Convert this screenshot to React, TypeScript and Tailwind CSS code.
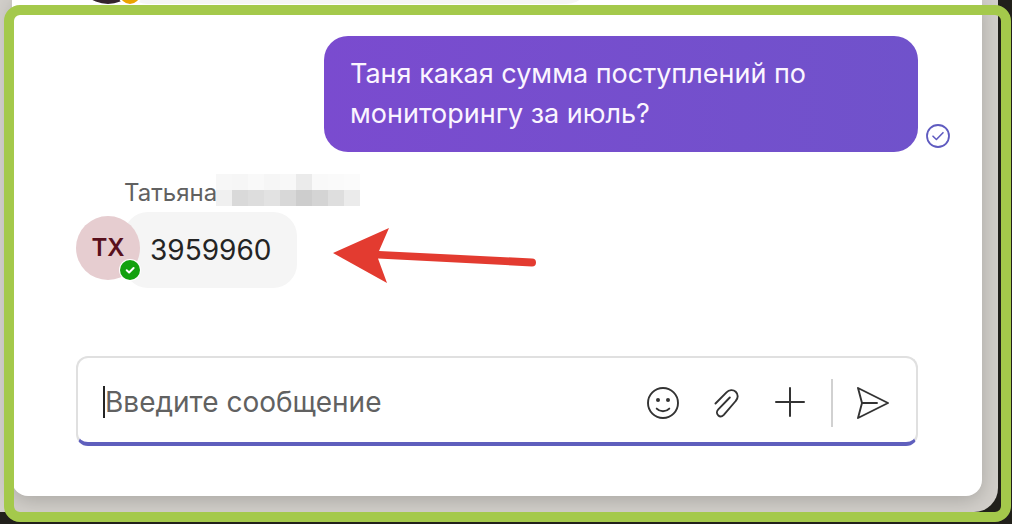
import React from 'react';

const nameCells = [
  'bg-[#f7f7f7]', 'bg-[#f6f6f6]', 'bg-[#f9f9f9]', 'bg-[#f6f6f6]', 'bg-[#f8f8f8]', 'bg-[#ebebeb]', 'bg-[#f9f9f9]', 'bg-[#fafafa]', 'bg-[#fbfbfb]',
  'bg-[#f0f0f0]', 'bg-[#d9d9d9]', 'bg-[#dddddd]', 'bg-[#e2e2e2]', 'bg-[#d8d8d8]', 'bg-[#cdcdcd]', 'bg-[#d4d4d4]', 'bg-[#dedede]', 'bg-[#ebebeb]',
];

function PreviousMessage() {
  return (
    <div className="flex h-1 items-end overflow-hidden pl-16">
      <div className="relative z-10 h-16 w-16 shrink-0 rounded-full bg-[#33232b]">
        <span className="absolute -right-0.5 -bottom-0.5 h-6 w-6 rounded-full border-2 border-white bg-[#eaa300]" />
      </div>
      <div className="-ml-4 h-16 w-[466px] rounded-3xl bg-[#f5f5f5]" />
    </div>
  );
}

function OutgoingMessage() {
  return (
    <div className="mt-8 flex items-end justify-end gap-2 pr-8">
      <div className="w-[594px] rounded-3xl bg-linear-to-r from-[#7a4bcf] to-[#7052cb] px-[26px] py-[18px] text-[27px] leading-10 text-[#fbf5ff]">
        Таня какая сумма поступлений по мониторингу за июль?
      </div>
      <svg className="mb-1 h-6 w-6" viewBox="0 0 24 24" fill="none" stroke="#5f5bc0" strokeWidth="1.8" strokeLinecap="round" strokeLinejoin="round" role="img" aria-label="Отправлено">
        <circle cx="12" cy="12" r="11" />
        <path d="m7 12.2 3.4 3.3L17 8.7" strokeWidth="1.6" />
      </svg>
    </div>
  );
}

function Arrow() {
  return (
    <svg className="ml-9 mt-3 h-[58px] w-[204px]" viewBox="0 0 204 58" aria-hidden="true">
      <path d="M0 26 56 1 46 24 199 31.5a4 4 0 0 1 0 8L45 31.5 54 56Z" fill="#e33b30" />
    </svg>
  );
}

function IncomingMessage() {
  return (
    <div className="mt-5 pl-16">
      <div className="flex h-10 items-start pl-12 text-2xl leading-10 text-[#616161]">
        <span className="pt-px">Татьяна</span>
        <span className="-ml-px mt-0.5 grid grid-cols-9 grid-rows-2" aria-hidden="true">
          {nameCells.map((cell, i) => (
            <span key={i} className={`h-4 w-4 ${cell}`} />
          ))}
        </span>
      </div>
      <div className="flex items-center">
        <div className="relative z-10 -mt-1 flex h-16 w-16 items-center justify-center rounded-full bg-[#e6cdd0] text-2xl font-semibold text-[#58101c]">
          ТХ
          <svg className="absolute -bottom-px -right-px h-[22px] w-[22px]" viewBox="0 0 22 22" fill="none" role="img" aria-label="В сети">
            <circle cx="11" cy="11" r="11" fill="#fff" />
            <circle cx="11" cy="11" r="10" fill="#13a10e" />
            <path d="m7.700 11.300 2.400 2.200 4.500-4.500" stroke="#fff" strokeWidth="2" strokeLinecap="round" strokeLinejoin="round" />
          </svg>
        </div>
        <div className="-ml-4 rounded-3xl bg-[#f5f5f5] px-[26px] py-[18px] text-[28px] leading-10 text-[#242424]">3959960</div>
        <Arrow />
      </div>
    </div>
  );
}

function Composer() {
  return (
    <form
      className="mx-16 mt-[68px] flex h-[90px] items-center rounded-xl border-2 border-b-4 border-[#e0e0e0] border-b-[#5f5fbd] px-[25px] pt-1"
      onSubmit={(e) => e.preventDefault()}
    >
      <span className="h-8 w-0.5 shrink-0 bg-[#242424]" aria-hidden="true" />
      <input
        type="text"
        aria-label="Введите сообщение"
        placeholder="Введите сообщение"
        className="h-10 min-w-0 flex-1 bg-transparent text-[28px] text-[#242424] outline-none placeholder:text-[#616161]"
      />
      <div className="flex items-center pt-px text-[#333333]">
        <button type="button" aria-label="Эмодзи" className="mr-8">
          <svg className="h-8 w-8" viewBox="0 0 32 32" fill="none" stroke="currentColor" strokeWidth="1.9" strokeLinecap="round">
            <circle cx="16" cy="16" r="15" />
            <path d="M9.7 21.6c3.2 3.5 9.4 3.5 12.6 0" />
            <circle cx="11" cy="13" r="2" fill="currentColor" stroke="none" />
            <circle cx="21" cy="13" r="2" fill="currentColor" stroke="none" />
          </svg>
        </button>
        <button type="button" aria-label="Прикрепить файл" className="mr-8">
          <svg className="h-8 w-8" viewBox="0 0 32 32" fill="none" stroke="currentColor" strokeWidth="1.9" strokeLinecap="round" strokeLinejoin="round">
            <path d="m4.5 16.5 11-11.2c2.600-2.600 6.600-3 9.200-.5 2.700 2.600 2.600 6.500 0 9.200L12.800 27.800c-1.700 1.700-4.100 1.900-5.700.4-1.600-1.600-1.500-4.100.2-5.800L18.800 10.500" />
          </svg>
        </button>
        <button type="button" aria-label="Добавить" className="mr-6">
          <svg className="h-8 w-8" viewBox="0 0 32 32" fill="none" stroke="currentColor" strokeWidth="2" strokeLinecap="round">
            <path d="M15 1v28M1 15h28" />
          </svg>
        </button>
        <span className="mr-6 h-12 w-0.5 bg-[#d1d1d1]" />
        <button type="submit" aria-label="Отправить" className="mr-0.5">
          <svg className="h-8 w-8" viewBox="0 0 32 32" fill="none" stroke="currentColor" strokeWidth="1.9" strokeLinejoin="round" strokeLinecap="round">
            <path d="M1 1 31 16 1 31 5 16ZM5 16h15" />
          </svg>
        </button>
      </div>
    </form>
  );
}

export default function App() {
  return (
    <div className="relative min-h-screen overflow-hidden bg-[#21201b] font-['Inter',sans-serif]">
      <div className="mr-[14px] rounded-br-3xl bg-[#d2cfca] pb-4 pl-3 pr-4">
        <main className="rounded-b-2xl bg-white pb-[50px] shadow-[0_4px_20px_rgba(0,0,0,0.2)]">
          <PreviousMessage />
          <OutgoingMessage />
          <IncomingMessage />
          <Composer />
        </main>
      </div>
      <div className="pointer-events-none absolute inset-x-1 bottom-0.5 top-[5px] mr-[-3px] rounded-2xl border-10 border-[#a4c94b]" />
    </div>
  );
}
